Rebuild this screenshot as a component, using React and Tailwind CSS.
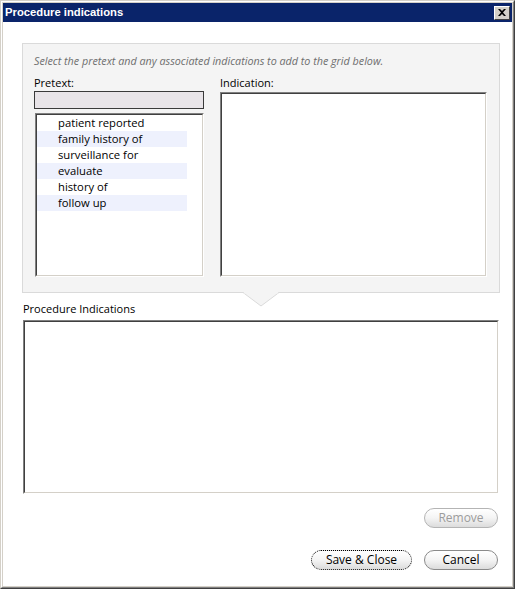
import React from 'react';

const pretexts = [
  'patient reported',
  'family history of',
  'surveillance for',
  'evaluate',
  'history of',
  'follow up',
];

// classic sunken 2px box
const Sunken = ({ className = '', children }) => (
  <div className={`border border-t-[#808080] border-l-[#808080] border-b-white border-r-white ${className}`}>
    <div className="h-full w-full border border-t-[#404040] border-l-[#404040] border-b-[#d4d0c8] border-r-[#d4d0c8] bg-white overflow-hidden">
      {children}
    </div>
  </div>
);

const PillButton = ({ children, disabled, focused, className = '' }) => (
  <button
    type="button"
    className={`h-[20px] rounded-[10px] bg-gradient-to-b from-white via-[#f4f4f4] to-[#dcdcdc] text-[12px] leading-none ${
      focused ? 'border border-dotted border-black' : disabled ? 'border border-[#b4b4b4]' : 'border border-[#8a8a8a]'
    } ${disabled ? 'text-[#9c9c9c]' : 'text-black'} ${className}`}
  >
    {children}
  </button>
);

const App = () => {
  return (
    <div className="w-[515px] h-[589px] font-['Open_Sans',sans-serif]">
      <div className="h-full border border-t-[#d4d0c8] border-l-[#d4d0c8] border-r-[#404040] border-b-[#404040]">
        <div className="h-full border border-t-white border-l-white border-r-[#808080] border-b-[#808080]">
          <div className="h-full p-px bg-[#d4d0c8] flex flex-col">
            {/* title bar */}
            <div className="h-[19px] bg-[#0a246a] flex items-center justify-between pl-[2px] pr-[2px]">
              <span className="text-white font-bold text-[11.25px] font-['Liberation_Sans',sans-serif]">Procedure indications</span>
              <div className="w-[16px] h-[14px] bg-[#d4d0c8] border border-t-white border-l-white border-r-[#404040] border-b-[#404040] flex items-center justify-center">
                <svg width="8" height="7" viewBox="0 0 8 7">
                  <path d="M0 0h2l2 2 2-2h2L5 3.5 8 7H6L4 5 2 7H0l3-3.5z" fill="#000" />
                </svg>
              </div>
            </div>

            {/* body */}
            <div className="flex-1 bg-white flex flex-col">
              <div className="relative ml-[19px] mt-[21px] w-[478px] h-[250px] bg-[#f4f4f4] border border-[#dadada] pl-[11px] pt-[9px]">
                <div className="h-[16px] text-[10.75px] italic text-[#6e6e6e] leading-[16px]">
                  Select the pretext and any associated indications to add to the grid below.
                </div>
                <div className="flex mt-[6px]">
                  <div className="w-[170px] flex flex-col">
                    <div className="h-[16px] text-[11px] leading-[16px] text-black">Pretext:</div>
                    <div className="h-[18px] bg-[#e8e4e8] border border-[#3a3a3a]" />
                    <Sunken className="mt-[4px] ml-px h-[164px] w-[169px]">
                      <div className="flex flex-col">
                        {pretexts.map((p, i) => (
                          <div
                            key={p}
                            className={`h-[16px] w-[150px] pl-[21px] text-[11.25px] leading-[15px] text-black ${i % 2 ? 'bg-[#eef1fd]' : ''}`}
                          >
                            {p}
                          </div>
                        ))}
                      </div>
                    </Sunken>
                  </div>
                  <div className="ml-[16px] w-[267px] flex flex-col">
                    <div className="h-[16px] text-[11px] leading-[16px] text-black">Indication:</div>
                    <Sunken className="mt-px h-[185px]" />
                  </div>
                </div>
                {/* pointer */}
                <svg className="absolute left-[220px] top-[248px]" width="36" height="15" viewBox="0 0 36 15">
                  <path d="M0 0.5 L18 14 L36 0.5" fill="#f4f4f4" stroke="#dadada" strokeWidth="1" />
                  <rect x="1" y="0" width="34" height="1.5" fill="#f4f4f4" />
                </svg>
              </div>

              <div className="ml-[20px] mt-[8px] h-[16px] text-[11px] leading-[16px] text-black">Procedure Indications</div>
              <Sunken className="ml-[20px] mt-[3px] w-[476px] h-[174px]" />

              <div className="flex justify-end mr-[14px] mt-[14px]">
                <PillButton disabled className="w-[74px]">Remove</PillButton>
              </div>
              <div className="flex justify-end gap-[12px] mr-[14px] mt-[22px]">
                <PillButton focused className="w-[101px]">Save &amp; Close</PillButton>
                <PillButton className="w-[74px]">Cancel</PillButton>
              </div>
            </div>
          </div>
        </div>
      </div>
    </div>
  );
};

export default App;
